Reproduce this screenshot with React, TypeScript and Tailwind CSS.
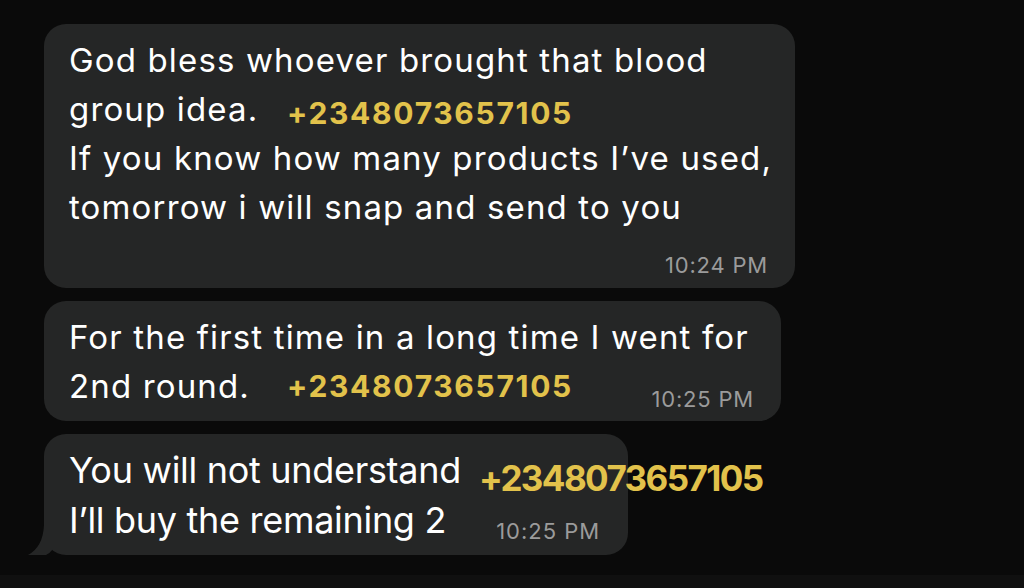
const FONT = "font-['Inter','Noto_Sans',sans-serif]";

function Phone({ className = "" }: { className?: string }) {
  return (
    <span
      className={`absolute font-bold leading-none text-[#e2c24b] whitespace-nowrap ${className}`}
    >
      +2348073657105
    </span>
  );
}

function Time({ children, className = "" }: { children: string; className?: string }) {
  return (
    <span className={`leading-none text-[#9b9b9b] whitespace-nowrap ${className}`}>{children}</span>
  );
}

export default function App() {
  return (
    <div className={`${FONT} w-[1024px] h-[588px] bg-[#0a0a0a] flex flex-col overflow-hidden`}>
      <div className="flex-1 flex flex-col gap-[13px] pt-[24px] pl-[44px]">
        {/* first bubble */}
        <div className="relative w-[751px] h-[264px] rounded-[22px] bg-[#252626] pl-[25px] pr-[27px] pt-[12px] flex flex-col text-white">
          <div className="text-[33px] leading-[49px] tracking-[1.15px] whitespace-nowrap">
            <div>God bless whoever brought that blood</div>
            <div>group idea.</div>
            <div>If you know how many products I’ve used,</div>
            <div>tomorrow i will snap and send to you</div>
          </div>
          <div className="flex justify-end mt-[22px]">
            <Time className="text-[22px] tracking-[0.8px]">10:24 PM</Time>
          </div>
          <Phone className="left-[243px] top-[74px] text-[30px] tracking-[1.7px]" />
        </div>

        {/* second bubble */}
        <div className="relative w-[737px] h-[120px] rounded-[22px] bg-[#252626] pl-[25px] pr-[27px] pt-[12px] text-white">
          <div className="text-[33px] leading-[49px] tracking-[1.15px] whitespace-nowrap">
            <div>For the first time in a long time I went for</div>
            <div className="flex items-start h-[49px]">
              <span>2nd round.</span>
              <span className="ml-auto mt-[26px] flex">
                <Time className="text-[22px] tracking-[0.8px]">10:25 PM</Time>
              </span>
            </div>
          </div>
          <Phone className="left-[243px] top-[70px] text-[30px] tracking-[1.7px]" />
        </div>

        {/* third bubble */}
        <div className="relative w-[584px] h-[121px] rounded-[22px] bg-[#252626] pl-[25px] pt-[11px] text-white">
          <svg
            className="absolute left-[-18px] bottom-0"
            width="40"
            height="44"
            viewBox="0 0 40 44"
          >
            <path d="M18 0 L18 14 Q17 36 2 44 L20 44 Q24 42 27 38 L27 0 Z" fill="#252626" />
          </svg>
          <div className="relative text-[36px] leading-[50px] tracking-[-0.3px] whitespace-nowrap">
            <div>You will not understand</div>
            <div className="flex items-start h-[50px]">
              <span>I’ll buy the remaining 2</span>
              <span className="ml-[50px] mt-[25px] flex">
                <Time className="text-[22px] tracking-[1px]">10:25 PM</Time>
              </span>
            </div>
          </div>
          <Phone className="left-[435px] top-[27px] text-[35px] tracking-[-1.6px]" />
        </div>
      </div>
      <div className="h-[13px] bg-[#101010]" />
    </div>
  );
}
